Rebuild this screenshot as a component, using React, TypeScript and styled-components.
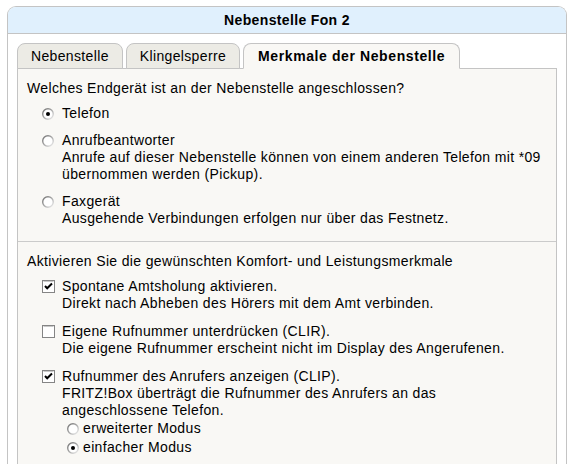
import React from "react";
import styled, { createGlobalStyle } from "styled-components";

const GlobalStyle = createGlobalStyle`
  html, body {
    margin: 0;
    padding: 0;
    overflow: hidden;
    background: #ffffff;
  }
  body {
    font-family: "Liberation Sans", Arial, sans-serif;
    font-size: 14px;
    letter-spacing: 0.35px;
    color: #000000;
  }
  * { box-sizing: border-box; }
`;

const Page = styled.div`
  padding: 6px 5px 0 7px;
`;

const Box = styled.div`
  border: 1px solid #c4c4c4;
  border-bottom: none;
  border-radius: 9px 9px 0 0;
  background: #ffffff;
`;

const Header = styled.div`
  height: 27px;
  background: #e0f0fd;
  border-bottom: 1px solid #c4c4c4;
  border-radius: 8px 8px 0 0;
  display: flex;
  align-items: center;
  justify-content: center;
  font-weight: bold;
  font-size: 14px;
  padding-bottom: 1px;
`;

const Body = styled.div`
  padding: 9px 9px 0 9px;
`;

const TabRow = styled.div`
  display: flex;
  gap: 3px;
  margin-bottom: -1px;
  position: relative;
  z-index: 1;
`;

const Tab = styled.div<{ $active?: boolean }>`
  height: 26px;
  padding: 0 ${(p) => (p.$active ? "14px" : "13px")} 1px;
  display: flex;
  align-items: center;
  border: 1px solid #c4c4c4;
  border-bottom-color: ${(p) => (p.$active ? "#f9f8f5" : "#c4c4c4")};
  border-radius: 8px 8px 0 0;
  background: ${(p) => (p.$active ? "#f9f8f5" : "#ecebe5")};
  font-weight: ${(p) => (p.$active ? "bold" : "normal")};
  letter-spacing: ${(p) => (p.$active ? "0.6px" : "0.35px")};
  white-space: nowrap;
`;

const Panel = styled.div`
  background: #f9f8f5;
  border: 1px solid #c4c4c4;
  padding-bottom: 40px;
`;

const Section = styled.div<{ $divider?: boolean }>`
  padding: 11px 8px 14px 9px;
  border-top: ${(p) => (p.$divider ? "1px solid #cbcbcb" : "none")};
  line-height: 17px;
`;

const Question = styled.div`
  margin-bottom: 8px;
`;

const List = styled.div<{ $gap: number }>`
  display: flex;
  flex-direction: column;
  gap: ${(p) => p.$gap}px;
  padding-left: 15px;
`;

const Option = styled.div`
  display: grid;
  grid-template-columns: 20px 1fr;
  align-items: start;
`;

const Control = styled.span`
  height: 17px;
  display: flex;
  align-items: center;
`;

const Label = styled.div`
  white-space: nowrap;
`;

const SubList = styled.div`
  display: flex;
  flex-direction: column;
  padding-left: 5px;
`;

const SubOption = styled.div`
  display: grid;
  grid-template-columns: 16px 1fr;
  line-height: 19px;
`;

const SubControl = styled.span`
  height: 19px;
  display: flex;
  align-items: center;
`;

function Radio({ checked }: { checked?: boolean }) {
  return (
    <svg width="12" height="12" viewBox="0 0 12 12">
      <defs>
        <linearGradient id="rg" x1="0" y1="0" x2="1" y2="1">
          <stop offset="0" stopColor="#6f6f6f" />
          <stop offset="0.5" stopColor="#a8a8a8" />
          <stop offset="1" stopColor="#f2f2f2" />
        </linearGradient>
      </defs>
      <circle cx="6" cy="6" r="5.3" fill="#ffffff" stroke="url(#rg)" strokeWidth="1.4" />
      {checked && <circle cx="6" cy="6" r="2" fill="#000000" />}
    </svg>
  );
}

function Check({ checked }: { checked?: boolean }) {
  return (
    <svg width="13" height="13" viewBox="0 0 13 13">
      <rect x="0.5" y="0.5" width="12" height="12" fill="#ffffff" stroke="#858585" />
      <path d="M1.5 1.5 H11.5" stroke="#c8c8c8" strokeWidth="1" />
      {checked && (
        <path d="M3 6 L5.2 8.3 L10 3.5" fill="none" stroke="#000000" strokeWidth="2" />
      )}
    </svg>
  );
}

export default function App() {
  return (
    <>
      <GlobalStyle />
      <Page>
        <Box>
          <Header>Nebenstelle Fon 2</Header>
          <Body>
            <TabRow>
              <Tab>Nebenstelle</Tab>
              <Tab>Klingelsperre</Tab>
              <Tab $active>Merkmale der Nebenstelle</Tab>
            </TabRow>
            <Panel>
              <Section>
                <Question>Welches Endgerät ist an der Nebenstelle angeschlossen?</Question>
                <List $gap={10}>
                  <Option>
                    <Control><Radio checked /></Control>
                    <Label>Telefon</Label>
                  </Option>
                  <Option>
                    <Control><Radio /></Control>
                    <Label>
                      Anrufbeantworter
                      <br />
                      Anrufe auf dieser Nebenstelle können von einem anderen Telefon mit *09
                      <br />
                      übernommen werden (Pickup).
                    </Label>
                  </Option>
                  <Option>
                    <Control><Radio /></Control>
                    <Label>
                      Faxgerät
                      <br />
                      Ausgehende Verbindungen erfolgen nur über das Festnetz.
                    </Label>
                  </Option>
                </List>
              </Section>
              <Section $divider>
                <Question>Aktivieren Sie die gewünschten Komfort- und Leistungsmerkmale</Question>
                <List $gap={11}>
                  <Option>
                    <Control><Check checked /></Control>
                    <Label>
                      Spontane Amtsholung aktivieren.
                      <br />
                      Direkt nach Abheben des Hörers mit dem Amt verbinden.
                    </Label>
                  </Option>
                  <Option>
                    <Control><Check /></Control>
                    <Label>
                      Eigene Rufnummer unterdrücken (CLIR).
                      <br />
                      Die eigene Rufnummer erscheint nicht im Display des Angerufenen.
                    </Label>
                  </Option>
                  <Option>
                    <Control><Check checked /></Control>
                    <Label>
                      Rufnummer des Anrufers anzeigen (CLIP).
                      <br />
                      FRITZ!Box überträgt die Rufnummer des Anrufers an das
                      <br />
                      angeschlossene Telefon.
                      <SubList>
                        <SubOption>
                          <SubControl><Radio /></SubControl>
                          <div>erweiterter Modus</div>
                        </SubOption>
                        <SubOption>
                          <SubControl><Radio checked /></SubControl>
                          <div>einfacher Modus</div>
                        </SubOption>
                      </SubList>
                    </Label>
                  </Option>
                </List>
              </Section>
            </Panel>
          </Body>
        </Box>
      </Page>
    </>
  );
}
